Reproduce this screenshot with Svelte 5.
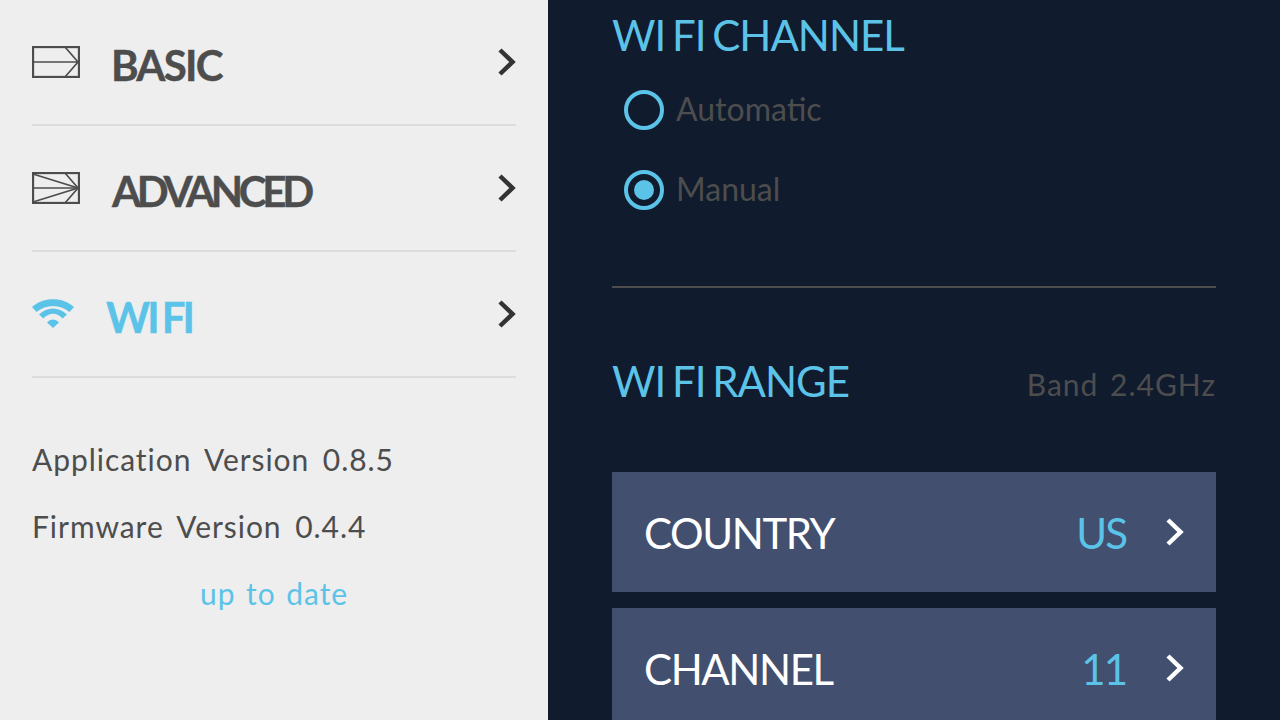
<script>
	const menu = [
		{ name: 'BASIC', icon: 'basic' },
		{ name: 'ADVANCED', icon: 'advanced' },
		{ name: 'WI FI', icon: 'wifi', active: true }
	];
	const rows = [
		{ name: 'COUNTRY', value: 'US' },
		{ name: 'CHANNEL', value: '11' }
	];
</script>

<div class="screen">
	<aside class="sidebar">
		{#each menu as item}
			<div class="menu-row" class:active={item.active}>
				<span class="menu-icon {item.icon}">
					{#if item.icon === 'wifi'}
						<svg width="42" height="30" viewBox="0 0 42 30" fill="#5cc3e8">
							<path d="M0 8 C11 -2.5 31 -2.5 42 8 L37.5 13 C28 5 14 5 4.5 13 Z" />
							<path d="M7 15.5 C15 7.5 27 7.5 35 15.5 L30.7 19.5 C25 13 17 13 11.3 19.5 Z" />
							<path d="M15 23.5 C18.5 19.5 23.5 19.5 27 23.5 L21 29 Z" />
						</svg>
					{:else}
						<svg width="48" height="32" viewBox="0 0 48 32" fill="none" stroke="#4d4d4d" stroke-width="1.7">
							<rect x="1" y="1" width="46" height="30" stroke-width="2.3" />
							<path d="M1 16 H46 M33 1 L46 16 L33 31" />
							{#if item.icon === 'advanced'}
								<path d="M1 2 L46 16 L1 30" />
							{/if}
						</svg>
					{/if}
				</span>
				<span class="menu-label {item.icon}">{item.name}</span>
				<svg width="18" height="28" viewBox="0 0 18 28" fill="none" stroke="#333" stroke-width="4.5">
					<path d="M2 2 L14.5 14 L2 26" />
				</svg>
			</div>
		{/each}
		<div class="versions">
			<p>Application Version 0.8.5</p>
			<p>Firmware Version 0.4.4</p>
			<p class="status">up to date</p>
		</div>
	</aside>

	<main class="content">
		<h2 class="first">WI FI CHANNEL</h2>
		<div class="radio-row">
			<span class="radio"></span>
			<span class="radio-label">Automatic</span>
		</div>
		<div class="radio-row">
			<span class="radio checked"></span>
			<span class="radio-label">Manual</span>
		</div>
		<hr />
		<div class="range-head">
			<h2>WI FI RANGE</h2>
			<span class="band">Band 2.4GHz</span>
		</div>
		<div class="list">
			{#each rows as row}
				<div class="list-row">
					<span class="row-name">{row.name}</span>
					<span class="row-value">{row.value}</span>
					<svg width="18" height="28" viewBox="0 0 18 28" fill="none" stroke="#fff" stroke-width="4.5">
						<path d="M2 2 L14.5 14 L2 26" />
					</svg>
				</div>
			{/each}
		</div>
	</main>
</div>

<style>
	:global(body) {
		margin: 0;
		overflow: hidden;
	}
	.screen {
		display: flex;
		width: 1280px;
		height: 720px;
		overflow: hidden;
		font-family: 'Lato', 'Liberation Sans', sans-serif;
	}
	.sidebar {
		box-sizing: border-box;
		width: 548px;
		padding: 0 32px;
		background: #eeeeee;
		color: #4d4d4d;
	}
	.menu-row {
		display: flex;
		align-items: center;
		box-sizing: border-box;
		height: 126px;
		border-bottom: 2px solid #dcdcdc;
	}
	.menu-icon {
		display: flex;
		width: 80px;
	}
	.menu-icon.basic {
		width: 79px;
	}
	.menu-icon.wifi {
		width: 74px;
	}
	.menu-label {
		flex: 1;
		padding-top: 6px;
		font-size: 42px;
		font-weight: 700;
		letter-spacing: -1.8px;
		-webkit-text-stroke: 0.4px currentColor;
	}
	.menu-label.advanced {
		letter-spacing: -4.3px;
	}
	.menu-label.wifi {
		letter-spacing: -3px;
		word-spacing: -2px;
	}
	.menu-row.active .menu-label {
		color: #5cc3e8;
	}
	.versions {
		padding-top: 60px;
		font-size: 30px;
		letter-spacing: 0.95px;
		word-spacing: 5px;
	}
	.versions p {
		margin: 0 0 25px;
		line-height: 42px;
	}
	.versions .status {
		padding-left: 168px;
		word-spacing: 2px;
		color: #5cc3e8;
	}
	.content {
		box-sizing: border-box;
		flex: 1;
		padding: 0 64px;
		background: #101b2d;
	}
	h2 {
		margin: 0;
		font-size: 42px;
		font-weight: 400;
		letter-spacing: -1px;
		word-spacing: -3px;
		color: #5cc3e8;
	}
	h2.first {
		padding-top: 10px;
		margin-bottom: 30px;
	}
	.radio-row {
		display: flex;
		align-items: center;
		gap: 12px;
		height: 40px;
		margin: 0 0 40px 12px;
		font-size: 32px;
		color: #4d4d4d;
	}
	.radio-label {
		padding-bottom: 4px;
	}
	.radio {
		box-sizing: border-box;
		display: flex;
		align-items: center;
		justify-content: center;
		width: 40px;
		height: 40px;
		border: 4px solid #5cc3e8;
		border-radius: 50%;
	}
	.radio.checked::after {
		content: '';
		width: 20px;
		height: 20px;
		border-radius: 50%;
		background: #5cc3e8;
	}
	hr {
		height: 2px;
		margin: 76px 0 0;
		border: 0;
		background: #4d4d4d;
	}
	.range-head {
		display: flex;
		align-items: center;
		justify-content: space-between;
		margin-top: 68px;
		margin-bottom: 66px;
	}
	.band {
		padding-top: 6px;
		font-size: 30px;
		letter-spacing: 1px;
		word-spacing: 3px;
		color: #4d4d4d;
	}
	.list {
		display: flex;
		flex-direction: column;
		gap: 16px;
	}
	.list-row {
		display: flex;
		align-items: center;
		flex: 0 0 120px;
		padding: 0 32px;
		background: #424f6f;
	}
	.row-name {
		flex: 1;
		padding-top: 2px;
		font-size: 42px;
		letter-spacing: -1.4px;
		color: #fff;
	}
	.row-value {
		margin-right: 40px;
		padding-top: 2px;
		font-size: 42px;
		letter-spacing: -2px;
		color: #5cc3e8;
	}
</style>
